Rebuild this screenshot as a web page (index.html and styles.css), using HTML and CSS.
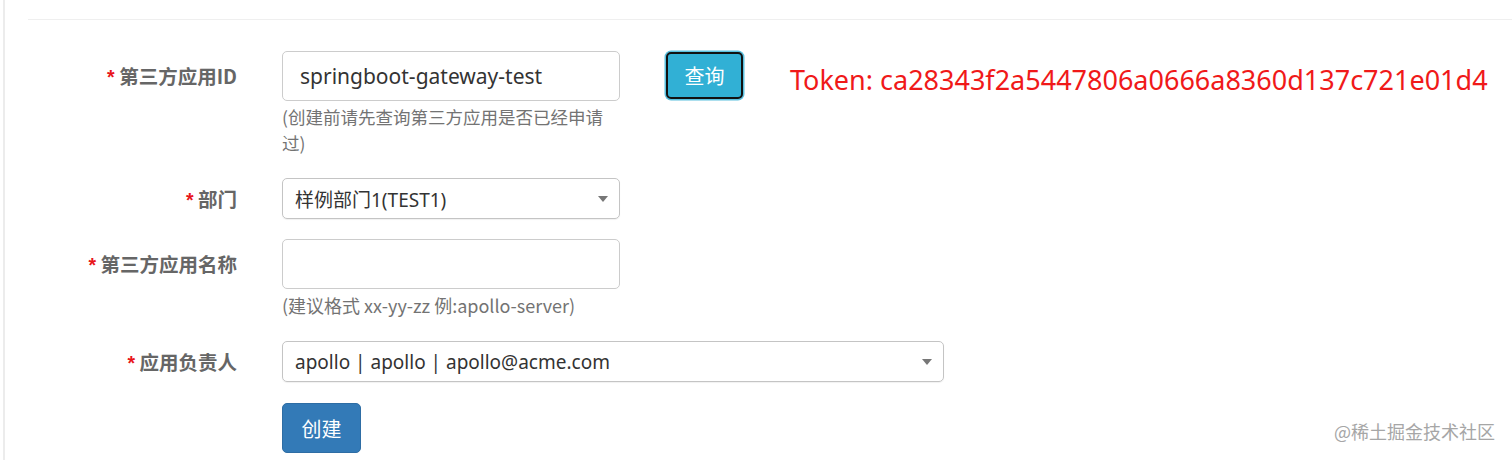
FILE: index.html
```html
<!DOCTYPE html>
<html lang="zh-CN">
<head>
<meta charset="utf-8">
<title>创建第三方应用</title>
<link rel="stylesheet" href="styles.css">
</head>
<body>
<div class="page">
  <div class="panel">
    <form class="form">
      <div class="row row-id">
        <label class="label"><span class="req">*</span> 第三方应用ID</label>
        <div class="control">
          <div class="field-line">
            <input class="input" type="text" value="springboot-gateway-test">
          </div>
          <div class="help help-wrap">(创建前请先查询第三方应用是否已经申请过)</div>
        </div>
        <button type="button" class="btn btn-info">查询</button>
        <div class="token">Token: ca28343f2a5447806a0666a8360d137c721e01d4</div>
      </div>

      <div class="row row-dept">
        <label class="label"><span class="req">*</span> 部门</label>
        <div class="control">
          <div class="select">
            <span class="select-text">样例部门1(TEST1)</span>
            <span class="caret"></span>
          </div>
        </div>
      </div>

      <div class="row row-name">
        <label class="label"><span class="req">*</span> 第三方应用名称</label>
        <div class="control">
          <input class="input" type="text" value="">
          <div class="help">(建议格式 xx-yy-zz 例:apollo-server)</div>
        </div>
      </div>

      <div class="row row-owner">
        <label class="label"><span class="req">*</span> 应用负责人</label>
        <div class="control control-wide">
          <div class="select">
            <span class="select-text">apollo | apollo | apollo@acme.com</span>
            <span class="caret"></span>
          </div>
        </div>
      </div>

      <div class="row row-submit">
        <div class="label"></div>
        <div class="control">
          <button type="button" class="btn btn-primary">创建</button>
        </div>
      </div>
    </form>
  </div>
  <div class="watermark">@稀土掘金技术社区</div>
</div>
</body>
</html>
```

FILE: styles.css
```css
html, body {
  margin: 0;
  padding: 0;
  background: #ffffff;
}

body {
  font-family: "Noto Sans", "Noto Sans CJK SC", sans-serif;
  color: #333333;
}

.page {
  position: relative;
  width: 1512px;
  height: 460px;
  overflow: hidden;
  box-sizing: border-box;
  padding-left: 3px;
}

.panel {
  height: 100%;
  border-left: 2px solid #ececec;
  padding-left: 23px;
  padding-top: 19px;
  box-sizing: border-box;
}

.form {
  border-top: 1px solid #efefef;
  padding-top: 31px;
  display: flex;
  flex-direction: column;
}

.row {
  display: flex;
  align-items: flex-start;
}

.label {
  width: 209px;
  flex: none;
  text-align: right;
  font-family: "Noto Sans CJK SC", sans-serif;
  font-weight: 700;
  font-size: 19.5px;
  color: #666666;
  line-height: 50px;
  margin-right: 45px;
}

.req {
  color: #e8151b;
  font-family: "Liberation Sans", sans-serif;
}

.control {
  width: 338px;
  flex: none;
}

.control-wide {
  width: 662px;
}

.input {
  display: block;
  box-sizing: border-box;
  width: 100%;
  height: 50px;
  margin: 0;
  padding: 0 17px;
  border: 1px solid #cccccc;
  border-radius: 5px;
  font-family: "Noto Sans", "Noto Sans CJK SC", sans-serif;
  font-size: 21px;
  color: #333333;
  background: #ffffff;
  outline: none;
}

.help {
  font-family: "Noto Sans CJK SC", sans-serif;
  font-size: 18px;
  line-height: 26px;
  color: #737373;
  margin-top: 3px;
}

.help-wrap {
  width: 330px;
  font-size: 17.5px;
}

.row-dept {
  margin-top: 22px;
}

.row-dept .label,
.row-owner .label {
  line-height: 42px;
}

.row-name {
  margin-top: 18px;
}

.row-owner {
  margin-top: 23px;
}

.row-submit {
  margin-top: 19px;
}

.select {
  box-sizing: border-box;
  height: 41px;
  border: 1px solid #c4c4c4;
  border-radius: 5px;
  display: flex;
  align-items: center;
  justify-content: space-between;
  padding: 0 11px 0 12px;
  box-shadow: 0 1px 1px rgba(0, 0, 0, 0.06);
}

.select-text {
  font-family: "Noto Sans", "Noto Sans CJK SC", sans-serif;
  font-size: 19px;
  color: #333333;
}

.caret {
  width: 0;
  height: 0;
  border-left: 5px solid transparent;
  border-right: 5px solid transparent;
  border-top: 6px solid #777777;
}

.btn {
  box-sizing: border-box;
  margin: 0;
  font-family: "Noto Sans CJK SC", sans-serif;
  font-size: 20px;
  color: #ffffff;
  cursor: pointer;
}

.btn-info {
  width: 77px;
  height: 47px;
  margin-left: 46px;
  margin-top: 1px;
  background: #31b0d5;
  border: 2px solid #111111;
  border-radius: 5px;
  box-shadow: 0 0 0 1.5px #5bc0de;
}

.btn-primary {
  width: 79px;
  height: 50px;
  background: #337ab7;
  border: 1px solid #2e6da4;
  border-radius: 5px;
}

.token {
  margin-left: 47px;
  margin-top: 8px;
  font-family: "Noto Sans", sans-serif;
  font-size: 27px;
  line-height: 42px;
  color: #f01919;
  white-space: nowrap;
}

.watermark {
  position: absolute;
  right: 17px;
  bottom: 16px;
  font-family: "Noto Sans CJK SC", sans-serif;
  font-size: 18px;
  color: #a6a6a6;
  text-shadow: 0 0 1px #ffffff;
}
```
